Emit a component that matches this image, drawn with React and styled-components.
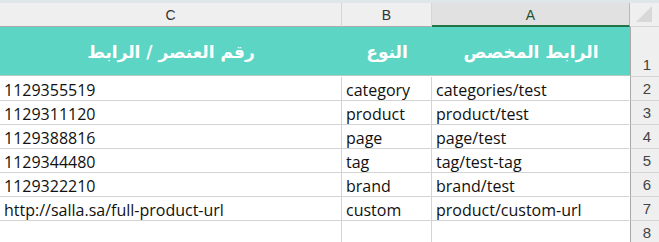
import React from 'react';
import styled, { createGlobalStyle } from 'styled-components';

const GlobalStyle = createGlobalStyle`
  html, body {
    margin: 0;
    padding: 0;
    background: #ffffff;
  }
  body {
    font-family: 'Open Sans', 'DejaVu Sans', sans-serif;
    overflow: hidden;
  }
`;

// column widths, from left to right (sheet is right-to-left: C, B, A, row numbers)
const COLS = '342px 90px 198px 33px';

const Sheet = styled.div`
  width: 659px;
  height: 242px;
  overflow: hidden;
  background: #ffffff;
  border-top: 3px solid #dfe6ea;
`;

const Row = styled.div`
  display: grid;
  grid-template-columns: ${COLS};
  width: 663px;
`;

const ColHead = styled.div`
  background: ${p => (p.active ? '#e1e1e1' : '#efefef')};
  border-right: 1px solid ${p => (p.last ? '#b8b8b8' : '#d6d6d6')};
  border-bottom: ${p => (p.active ? '2px solid #217346' : '1px solid #ababab')};
  height: ${p => (p.active ? '21px' : '22px')};
  display: flex;
  align-items: center;
  justify-content: center;
  font-family: 'Liberation Sans', sans-serif;
  font-size: 14px;
  color: ${p => (p.active ? '#1f5135' : '#333')};
  padding-top: 1px;
`;

const Corner = styled.div`
  height: 23px;
  background: #efefef;
  border-bottom: 1px solid #d6d6d6;
  position: relative;
  &::after {
    content: '';
    position: absolute;
    right: 11px;
    bottom: 4px;
    width: 0;
    height: 0;
    border-left: 16px solid transparent;
    border-bottom: 16px solid #d8d8d8;
  }
`;

const TitleCell = styled.div`
  height: 49px;
  background: #5dd5c4;
  border-bottom: 1px solid #b9c9c6;
  display: flex;
  align-items: center;
  justify-content: center;
  direction: rtl;
  color: #ffffff;
  font-family: 'DejaVu Sans', sans-serif;
  font-weight: bold;
  font-size: 17px;
  padding-top: 2px;
  box-sizing: border-box;
`;

const Cell = styled.div`
  height: 24px;
  box-sizing: border-box;
  border-right: 1px solid ${p => (p.last ? 'transparent' : '#d4d4d4')};
  border-bottom: 1px solid #d4d4d4;
  padding: 0 4px;
  display: flex;
  align-items: flex-end;
  font-family: 'Open Sans', sans-serif;
  font-size: 16px;
  line-height: 20px;
  color: #111;
  white-space: nowrap;
  overflow: hidden;
`;

const RowNum = styled.div`
  height: ${p => (p.tall ? '50px' : '24px')};
  box-sizing: border-box;
  background: #efefef;
  border-left: 1px solid #a9a9a9;
  border-bottom: 1px solid #d4d4d4;
  display: flex;
  align-items: flex-end;
  justify-content: center;
  padding-bottom: 1px;
  font-family: 'Liberation Sans', sans-serif;
  font-size: 15px;
  line-height: 20px;
  color: #444;
`;

const rows = [
  ['1129355519', 'category', 'categories/test'],
  ['1129311120', 'product', 'product/test'],
  ['1129388816', 'page', 'page/test'],
  ['1129344480', 'tag', 'tag/test-tag'],
  ['1129322210', 'brand', 'brand/test'],
  ['http://salla.sa/full-product-url', 'custom', 'product/custom-url'],
  ['', '', ''],
];

export default function App() {
  return (
    <>
      <GlobalStyle />
      <Sheet>
        <Row>
          <ColHead>C</ColHead>
          <ColHead>B</ColHead>
          <ColHead active last>A</ColHead>
          <Corner />
        </Row>
        <Row>
          <TitleCell>رقم العنصر / الرابط</TitleCell>
          <TitleCell>النوع</TitleCell>
          <TitleCell>الرابط المخصص</TitleCell>
          <RowNum tall>1</RowNum>
        </Row>
        {rows.map((r, i) => (
          <Row key={i}>
            <Cell>{r[0]}</Cell>
            <Cell>{r[1]}</Cell>
            <Cell last>{r[2]}</Cell>
            <RowNum>{i + 2}</RowNum>
          </Row>
        ))}
      </Sheet>
    </>
  );
}
